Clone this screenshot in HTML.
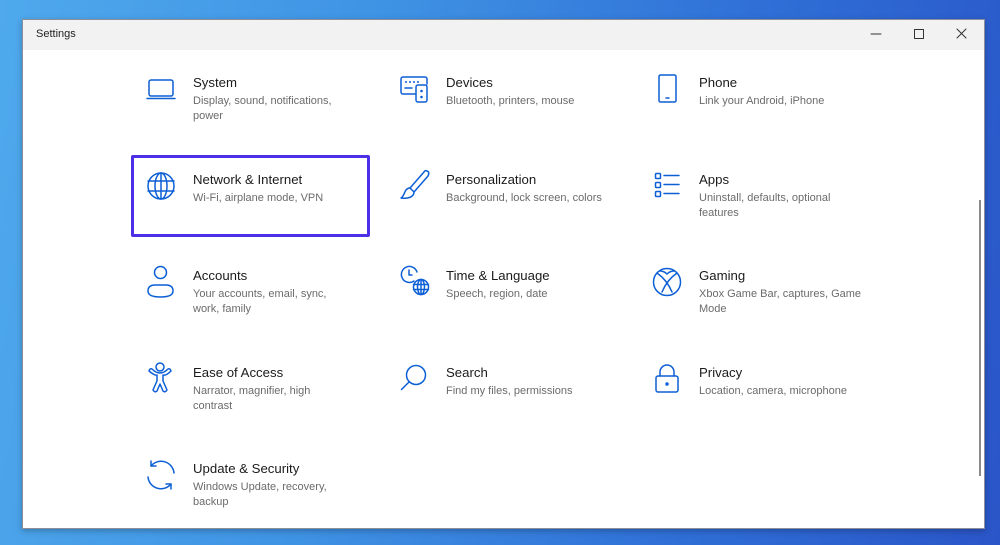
<!DOCTYPE html>
<html><head><meta charset="utf-8"><style>
*{margin:0;padding:0;box-sizing:border-box}
body{width:1000px;height:545px;overflow:hidden;position:relative;font-family:"Segoe UI","Liberation Sans",sans-serif;
background:linear-gradient(100deg,#4fa9ec 0%,#3f93e4 35%,#2f6fd6 70%,#2a55c8 100%)}
.win{position:absolute;left:22px;top:19px;width:963px;height:510px;background:#fff;border:1px solid #8a8f99;box-shadow:0 2px 6px rgba(0,0,0,.25)}
.tb{position:absolute;left:0;top:0;right:0;height:30px;background:#f2f2f2}
.tb .t{position:absolute;left:13px;top:8px;font-size:11px;color:#222}
.it{position:absolute;font-size:13.2px;color:#1b1b1b;line-height:16px;margin-top:1px}
.it div{font-size:11px;color:#6b6b6b;line-height:15px;margin-top:3px}
.hl{position:absolute;left:131px;top:155px;width:239px;height:82px;border:3px solid #4b30e8;border-radius:2px}
.sb{position:absolute;left:979px;top:200px;width:2px;height:276px;background:#8a8a8a}
svg{position:absolute;left:0;top:0}
</style></head><body>
<div class="win"><div class="tb"><span class="t">Settings</span></div></div>
<div class="sb"></div>
<div class="hl"></div>
<div class="it" style="left:193px;top:74px">System<div>Display, sound, notifications,<br>power</div></div>
<div class="it" style="left:446px;top:74px">Devices<div>Bluetooth, printers, mouse</div></div>
<div class="it" style="left:699px;top:74px">Phone<div>Link your Android, iPhone</div></div>
<div class="it" style="left:193px;top:171px">Network &amp; Internet<div>Wi-Fi, airplane mode, VPN</div></div>
<div class="it" style="left:446px;top:171px">Personalization<div>Background, lock screen, colors</div></div>
<div class="it" style="left:699px;top:171px">Apps<div>Uninstall, defaults, optional<br>features</div></div>
<div class="it" style="left:193px;top:267px">Accounts<div>Your accounts, email, sync,<br>work, family</div></div>
<div class="it" style="left:446px;top:267px">Time &amp; Language<div>Speech, region, date</div></div>
<div class="it" style="left:699px;top:267px">Gaming<div>Xbox Game Bar, captures, Game<br>Mode</div></div>
<div class="it" style="left:193px;top:364px">Ease of Access<div>Narrator, magnifier, high<br>contrast</div></div>
<div class="it" style="left:446px;top:364px">Search<div>Find my files, permissions</div></div>
<div class="it" style="left:699px;top:364px">Privacy<div>Location, camera, microphone</div></div>
<div class="it" style="left:193px;top:460px">Update &amp; Security<div>Windows Update, recovery,<br>backup</div></div>
<svg width="1000" height="545" fill="none" stroke="#0d5fd6" stroke-width="1.5" stroke-linecap="round" stroke-linejoin="round">
<g stroke="#333" stroke-width="1"><line x1="871" y1="34" x2="881" y2="34"/><rect x="914.5" y="29.5" width="9" height="9"/><path d="M957 29L966 38M966 29L957 38"/></g>
<rect x="149" y="80" width="24" height="16" rx="2"/><line x1="147" y1="98.5" x2="175" y2="98.5"/>
<path d="M415 94H403a2 2 0 0 1-2-2V79a2 2 0 0 1 2-2h22a2 2 0 0 1 2 2v5"/><rect x="416" y="85" width="11" height="17" rx="2"/>
<g fill="#0d5fd6" stroke="none"><circle cx="406" cy="82" r="1"/><circle cx="410" cy="82" r="1"/><circle cx="414" cy="82" r="1"/><circle cx="418" cy="82" r="1"/><circle cx="421.5" cy="91" r="1.3"/><circle cx="421.5" cy="97" r="1.3"/></g><line x1="405" y1="88" x2="412" y2="88"/>
<rect x="659" y="75" width="17" height="27" rx="1.5"/><line x1="666" y1="98" x2="669" y2="98"/>
<circle cx="161" cy="186" r="13"/><ellipse cx="161" cy="186" rx="6" ry="13"/><line x1="148" y1="181" x2="174" y2="181"/><line x1="148" y1="191" x2="174" y2="191"/><line x1="161" y1="173" x2="161" y2="199"/>
<path d="M427 171Q430 172 428 176L414 192L410 188L424 172Q425 170 427 171Z"/><path d="M410 188C404 188 405 196 401 198C408 199 414 197 414 192"/>
<rect x="655.5" y="173.5" width="5" height="5" rx="1"/><rect x="655.5" y="182.5" width="5" height="5" rx="1"/><rect x="655.5" y="191.5" width="5" height="5" rx="1"/>
<path d="M664 175.5H679M664 184.5H679M664 193.5H679"/>
<circle cx="160.5" cy="272.5" r="6"/><path d="M148 291Q148 285 155 285H166Q173 285 173 291Q173 297 160.5 297Q148 297 148 291Z"/>
<path d="M414 281A8 8 0 1 1 417 272"/><path d="M409 270V275H412"/><circle cx="421" cy="287" r="7.5"/><ellipse cx="421" cy="287" rx="3.5" ry="7.5"/><path d="M413.5 284.5H428.5M413.5 289.5H428.5M421 279.5V294.5"/>
<circle cx="667" cy="282" r="13.5"/><path d="M657 273Q667 280 672 292M677 273Q667 280 662 292M660 271Q664 271 667 274Q670 271 674 271"/>
<circle cx="160" cy="367" r="4"/><path d="M149 371Q155 376 157 375V381L153 390Q155 393 157 391L160 384L163 391Q165 393 167 390L163 381V375Q166 376 171 371Q170 368 168 369Q164 373 160 373Q156 373 152 369Q150 368 149 371Z"/>
<circle cx="416" cy="375" r="9.5"/><line x1="409" y1="382" x2="401.5" y2="389.5"/>
<rect x="656" y="376" width="22" height="16" rx="2"/><path d="M660 376V372a7 7 0 0 1 14 0V376"/><circle cx="667" cy="384" r="1" fill="#0d5fd6"/>
<path d="M151 466A13 13 0 0 1 174 473"/><path d="M151 461V466H156"/><path d="M171 484A13 13 0 0 1 148 477"/><path d="M171 489V484H166"/>
</svg>
</body></html>
